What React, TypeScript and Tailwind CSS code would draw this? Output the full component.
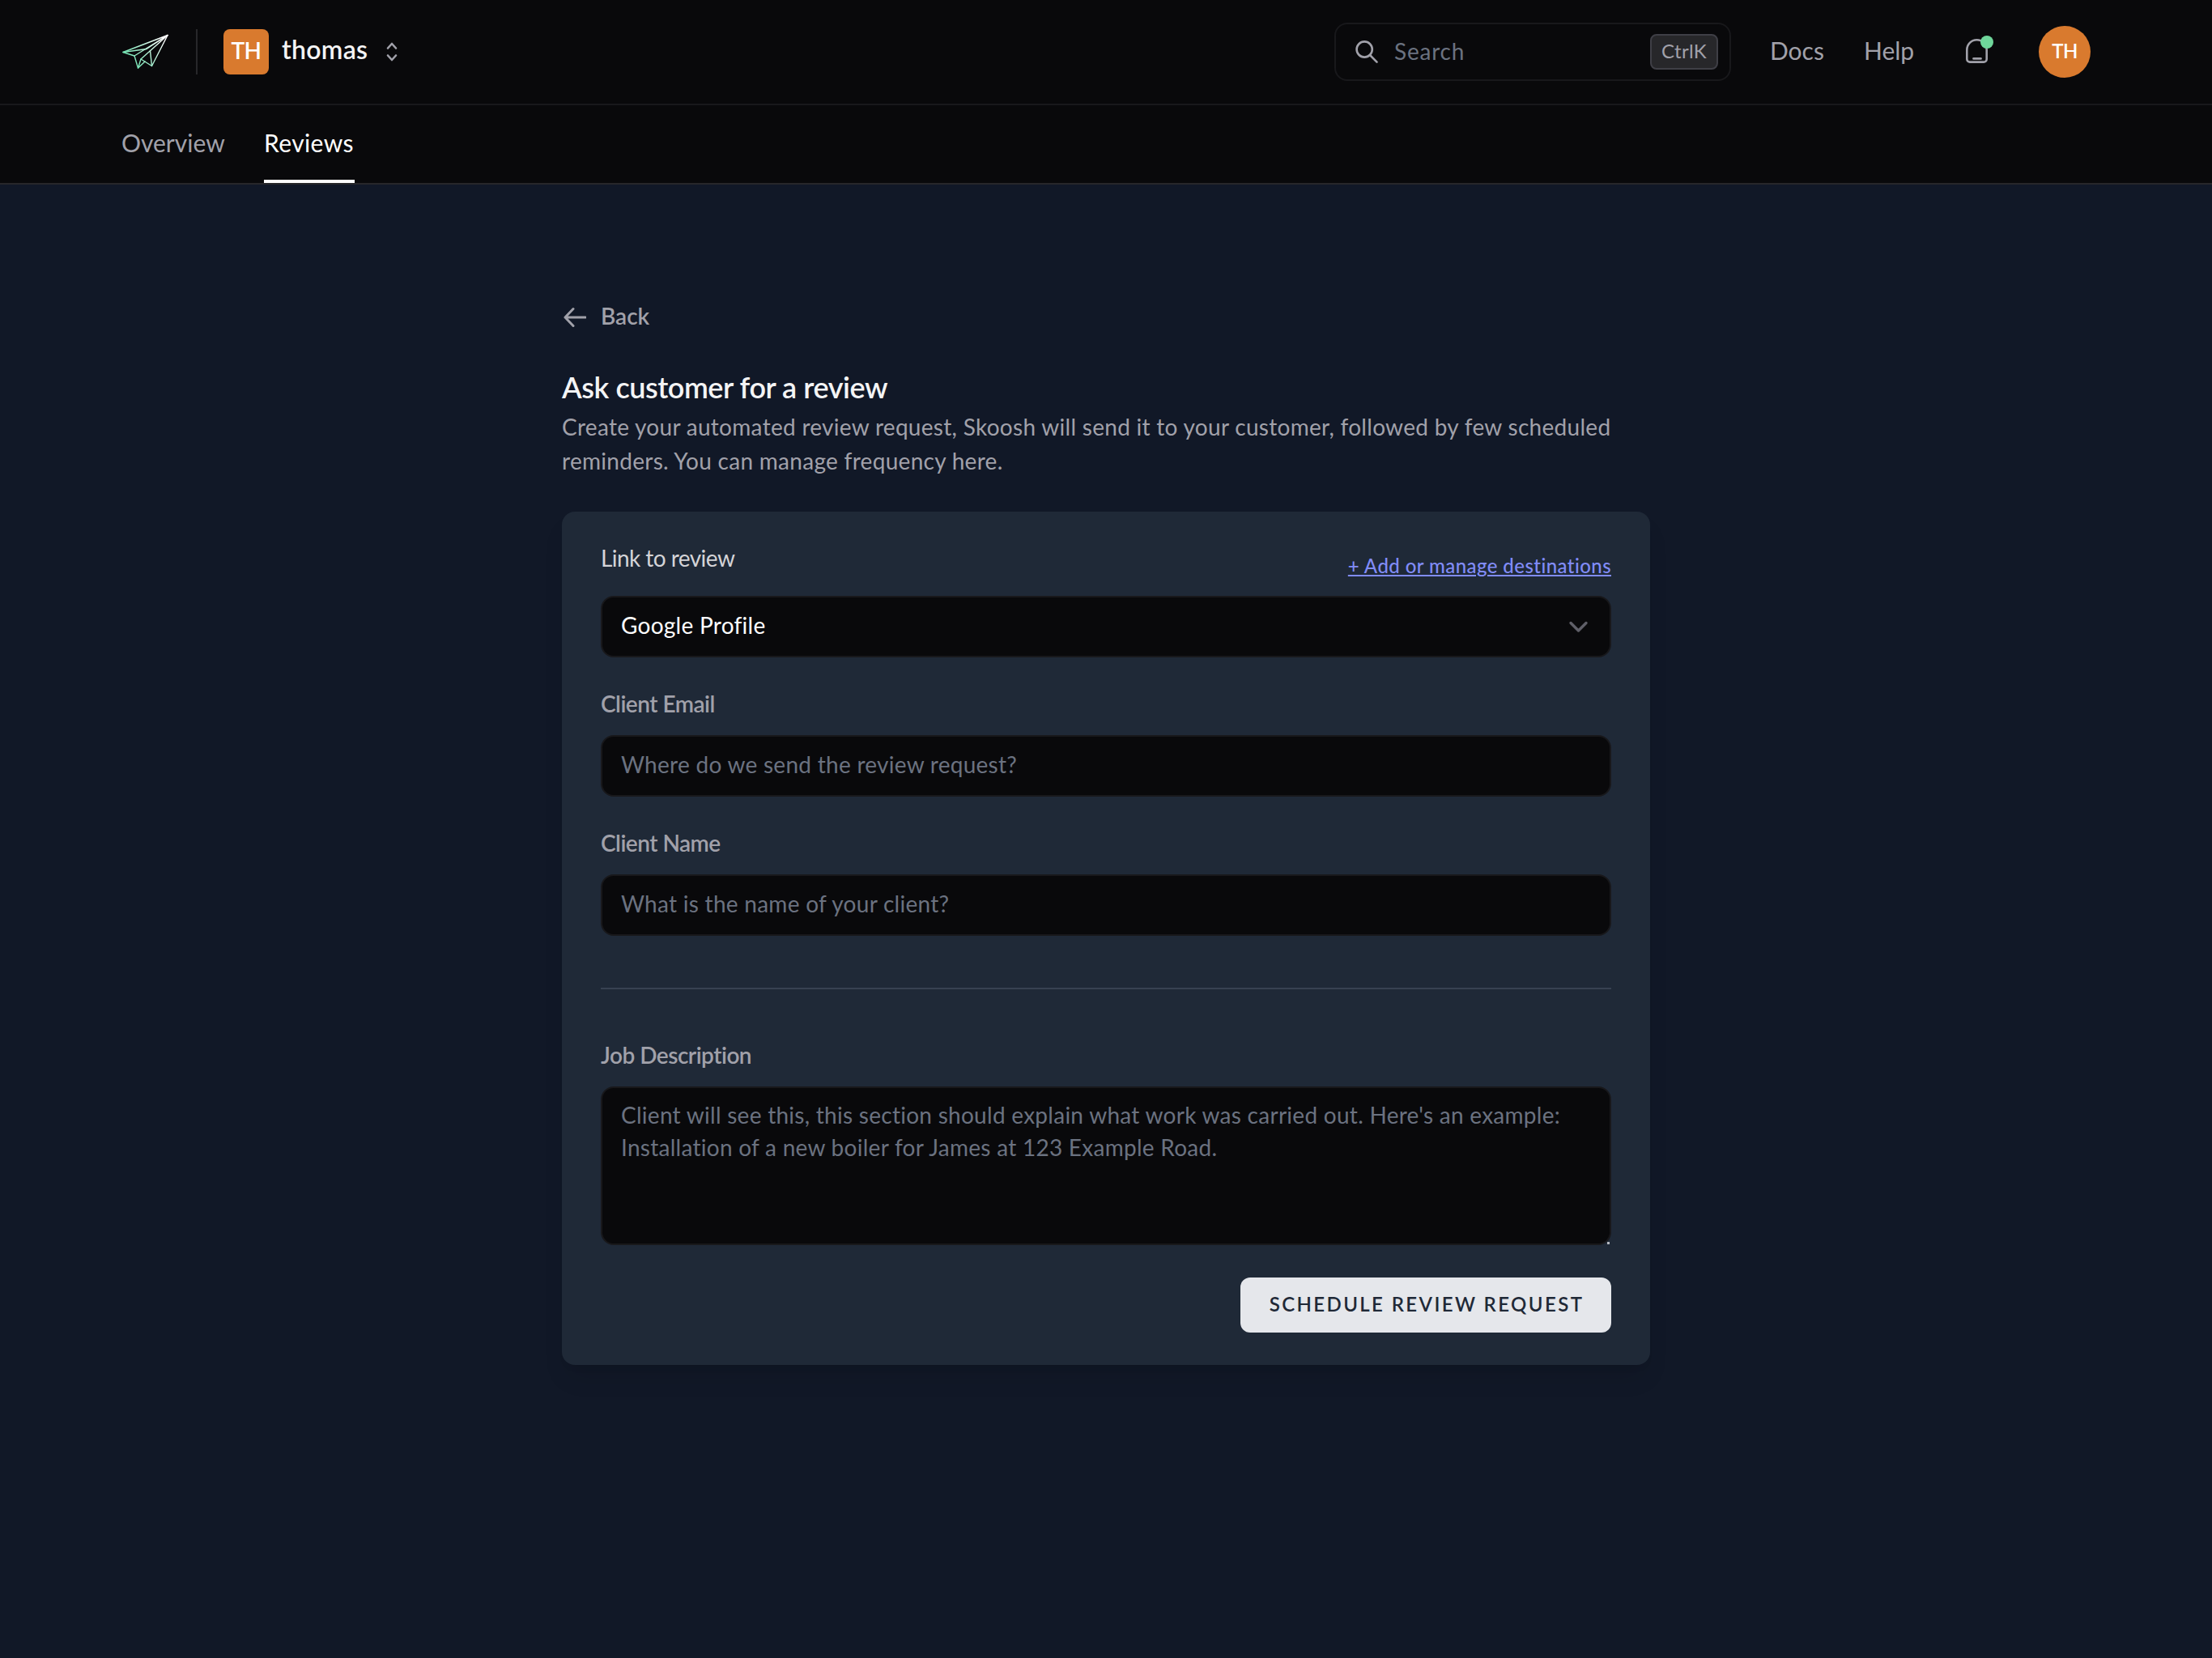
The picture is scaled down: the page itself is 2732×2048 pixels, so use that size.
import React from "react"
import clsx from "clsx"

interface TabProps {
	label: string
	active?: boolean
	className?: string
}

interface FieldProps {
	label: string
	placeholder: string
}

const LABEL =
	"block text-[28px] leading-10 font-semibold tracking-[-0.5px] text-[#a1a1aa]"
const CONTROL =
	"block w-full rounded-2xl border-2 border-[#18181b] bg-[#09090b] px-[23px] text-[28px] tracking-[0.27px] placeholder:text-[#6b7280] outline-none"

const Logo: React.FC = () => (
	<svg width="60" height="48" viewBox="0 0 60 48" fill="none">
		<defs>
			<linearGradient
				id="plane"
				x1="8"
				y1="42"
				x2="50"
				y2="6"
				gradientUnits="userSpaceOnUse"
			>
				<stop stopColor="#5fe0a8" />
				<stop offset="1" stopColor="#ffffff" />
			</linearGradient>
		</defs>
		<g
			stroke="url(#plane)"
			strokeWidth="1.4"
			strokeLinejoin="round"
			strokeLinecap="round"
		>
			<path d="M57 3.5 2 24.5 16 29Z" />
			<path d="M2 24.5 31 20.5 57 3.5" />
			<path d="M16 29 20.5 44 24 33 57 3.5" />
			<path d="M20.5 44 29 36" />
			<path d="M24 33 37.5 41.5 57 3.5" />
			<path d="M35.5 22.8 37.5 41.5" />
		</g>
	</svg>
)

const Tab: React.FC<TabProps> = ({ label, active, className }) => (
	<a
		href="#"
		className={clsx(
			"flex h-24 items-center border-b-4 text-[30px]",
			active
				? "border-white text-white"
				: "border-transparent text-[#a1a1aa]",
			className
		)}
	>
		{label}
	</a>
)

const Header: React.FC = () => (
	<header className="flex h-[130px] items-center justify-between border-b-2 border-[#18181b] px-[150px]">
		<div className="flex items-center">
			<Logo />
			<div className="ml-8 h-14 w-0.5 bg-[#27272a]" />
			<div className="ml-8 flex size-14 items-center justify-center rounded-lg bg-[#d97a2e] pb-1 text-[28px] font-semibold tracking-[-0.5px] text-white">
				TH
			</div>
			<span className="ml-4 w-[108px] pb-1.5 text-[32px] leading-10 font-semibold tracking-[0.3px] text-[#f4f4f5]">
				thomas
			</span>
			<svg
				className="ml-[21px]"
				width="14"
				height="24"
				viewBox="0 0 14 24"
				fill="none"
				stroke="#a1a1aa"
				strokeWidth="2.6"
				strokeLinecap="round"
				strokeLinejoin="round"
			>
				<path d="M2 7.5 7 2l5 5.500M2 16.500 7 22l5-5.500" />
			</svg>
		</div>
		<div className="flex items-center text-[#a1a1aa]">
			<div className="flex h-[72px] w-[490px] items-center rounded-2xl border-2 border-[#18181b] pr-3.5 pl-6">
				<svg
					width="28"
					height="28"
					viewBox="0 0 28 28"
					fill="none"
					stroke="#a1a1aa"
					strokeWidth="2.6"
					strokeLinecap="round"
				>
					<circle cx="11.200" cy="11" r="9.600" />
					<path d="m18 18 8.500 8.600" />
				</svg>
				<span className="ml-5 flex-1 pb-0.5 text-[28px] tracking-[0.8px] text-[#6b7280]">
					Search
				</span>
				<kbd className="flex h-11 w-[84px] items-center justify-center rounded-lg border-2 border-[#3f3f46] bg-[#27272a] pb-0.5 font-['Lato',sans-serif] text-2xl tracking-[0.3px]">
					CtrlK
				</kbd>
			</div>
			<a href="#" className="ml-12 w-[68px] pb-[3px] text-[30px]">
				Docs
			</a>
			<a href="#" className="ml-12 w-16 pb-[3px] text-[30px]">
				Help
			</a>
			<div className="relative ml-[60px] size-8">
				<svg
					width="32"
					height="32"
					viewBox="0 0 32 32"
					fill="none"
					stroke="#a1a1aa"
					strokeWidth="2.600"
					strokeLinecap="round"
				>
					<path d="M3.300 13.500a12.200 12.200 0 0 1 24.400 0V25a3.600 3.600 0 0 1-3.600 3.600H6.900A3.600 3.600 0 0 1 3.300 25Z" />
					<path d="M11.500 24.400h9" />
				</svg>
				<span className="absolute -top-1 left-5 size-4 rounded-full bg-[#6fd69b]" />
			</div>
			<div className="ml-[60px] flex size-16 items-center justify-center rounded-full bg-[#d97a2e] pb-0.5 text-2xl font-semibold tracking-[-0.5px] text-white">
				TH
			</div>
		</div>
	</header>
)

const Field: React.FC<FieldProps> = ({ label, placeholder }) => (
	<div className="mt-[37px]">
		<label className={clsx(LABEL, "mb-[19px]")}>{label}</label>
		<input className={clsx(CONTROL, "h-[76px] pb-1")} placeholder={placeholder} />
	</div>
)

const App: React.FC = (): React.ReactElement => {
	return (
		<div className="min-h-screen bg-[#111827] font-['Lato',sans-serif]">
			<div className="bg-[#09090b]">
				<Header />
				<nav className="flex gap-12 border-b-2 border-[#27272a] px-[150px]">
					<Tab label="Overview" className="w-32" />
					<Tab
						label="Reviews"
						active
						className="w-28 tracking-[0.4px]"
					/>
				</nav>
			</div>
			<main className="mx-auto w-[1344px] pt-36">
				<a
					href="#"
					className="flex h-10 items-center gap-[18px] text-[28px] font-semibold text-[#a1a1aa]"
				>
					<svg
						width="30"
						height="28"
						viewBox="0 0 30 28"
						fill="none"
						stroke="#a1a1aa"
						strokeWidth="3"
						strokeLinecap="round"
						strokeLinejoin="round"
					>
						<path d="M29 14H4M14 3.500 4 14l10 10.500" />
					</svg>
					<span className="pb-1">Back</span>
				</a>
				<h1 className="mt-[38px] text-4xl leading-[56px] font-semibold tracking-[-0.45px] text-[#f4f4f5]">
					Ask customer for a review
				</h1>
				<p className="text-[28px] leading-[42px] tracking-[0.290px] text-[#a1a1aa]">
					Create your automated review request, Skoosh will send it to
					your customer, followed by few scheduled
					<br />
					reminders. You can manage frequency here.
				</p>
				<section className="mt-[42px] rounded-2xl bg-[#1f2937] px-12 pt-[37px] pb-10 shadow-[0_20px_30px_-6px_rgba(0,0,0,0.1),0_8px_12px_-8px_rgba(0,0,0,0.1)]">
					<div className="flex h-[67px] items-start justify-between">
						<label className="text-[28px] leading-10 tracking-[-0.55px] text-[#d4d4d8]">
							Link to review
						</label>
						<a
							href="#"
							className="mt-3 text-2xl leading-9 font-medium tracking-[0.430px] text-[#818cf8] underline"
						>
							+ Add or manage destinations
						</a>
					</div>
					<div
						className={clsx(
							CONTROL,
							"flex h-[76px] items-center justify-between pb-1 text-white"
						)}
					>
						<span>Google Profile</span>
						<svg
							className="mt-1"
							width="30"
							height="18"
							viewBox="0 0 30 18"
							fill="none"
							stroke="#5f5f68"
							strokeWidth="3.400"
							strokeLinecap="round"
							strokeLinejoin="round"
						>
							<path d="m5 4.500 9.500 9.500L24 4.500" />
						</svg>
					</div>
					<Field
						label="Client Email"
						placeholder="Where do we send the review request?"
					/>
					<Field
						label="Client Name"
						placeholder="What is the name of your client?"
					/>
					<hr className="mt-16 border-t-2 border-[#374151]" />
					<label className={clsx(LABEL, "mt-[61px] mb-[19px]")}>
						Job Description
					</label>
					<div className="relative">
						<textarea
							className={clsx(
								CONTROL,
								"h-[196px] resize-none pt-[13px] leading-10"
							)}
							placeholder={
								"Client will see this, this section should explain what work was carried out. Here's an example:\nInstallation of a new boiler for James at 123 Example Road."
							}
						/>
						<span className="absolute right-0.5 bottom-[1px] size-[3px] bg-[#b4b7bf]" />
					</div>
					<div className="mt-10 flex justify-end">
						<button className="h-[68px] w-[458px] rounded-xl bg-[#e5e7eb] pb-0.5 pl-0.5 text-2xl font-semibold tracking-[2.400px] text-[#1f2937] uppercase">
							Schedule review request
						</button>
					</div>
				</section>
			</main>
		</div>
	)
}

export default App
